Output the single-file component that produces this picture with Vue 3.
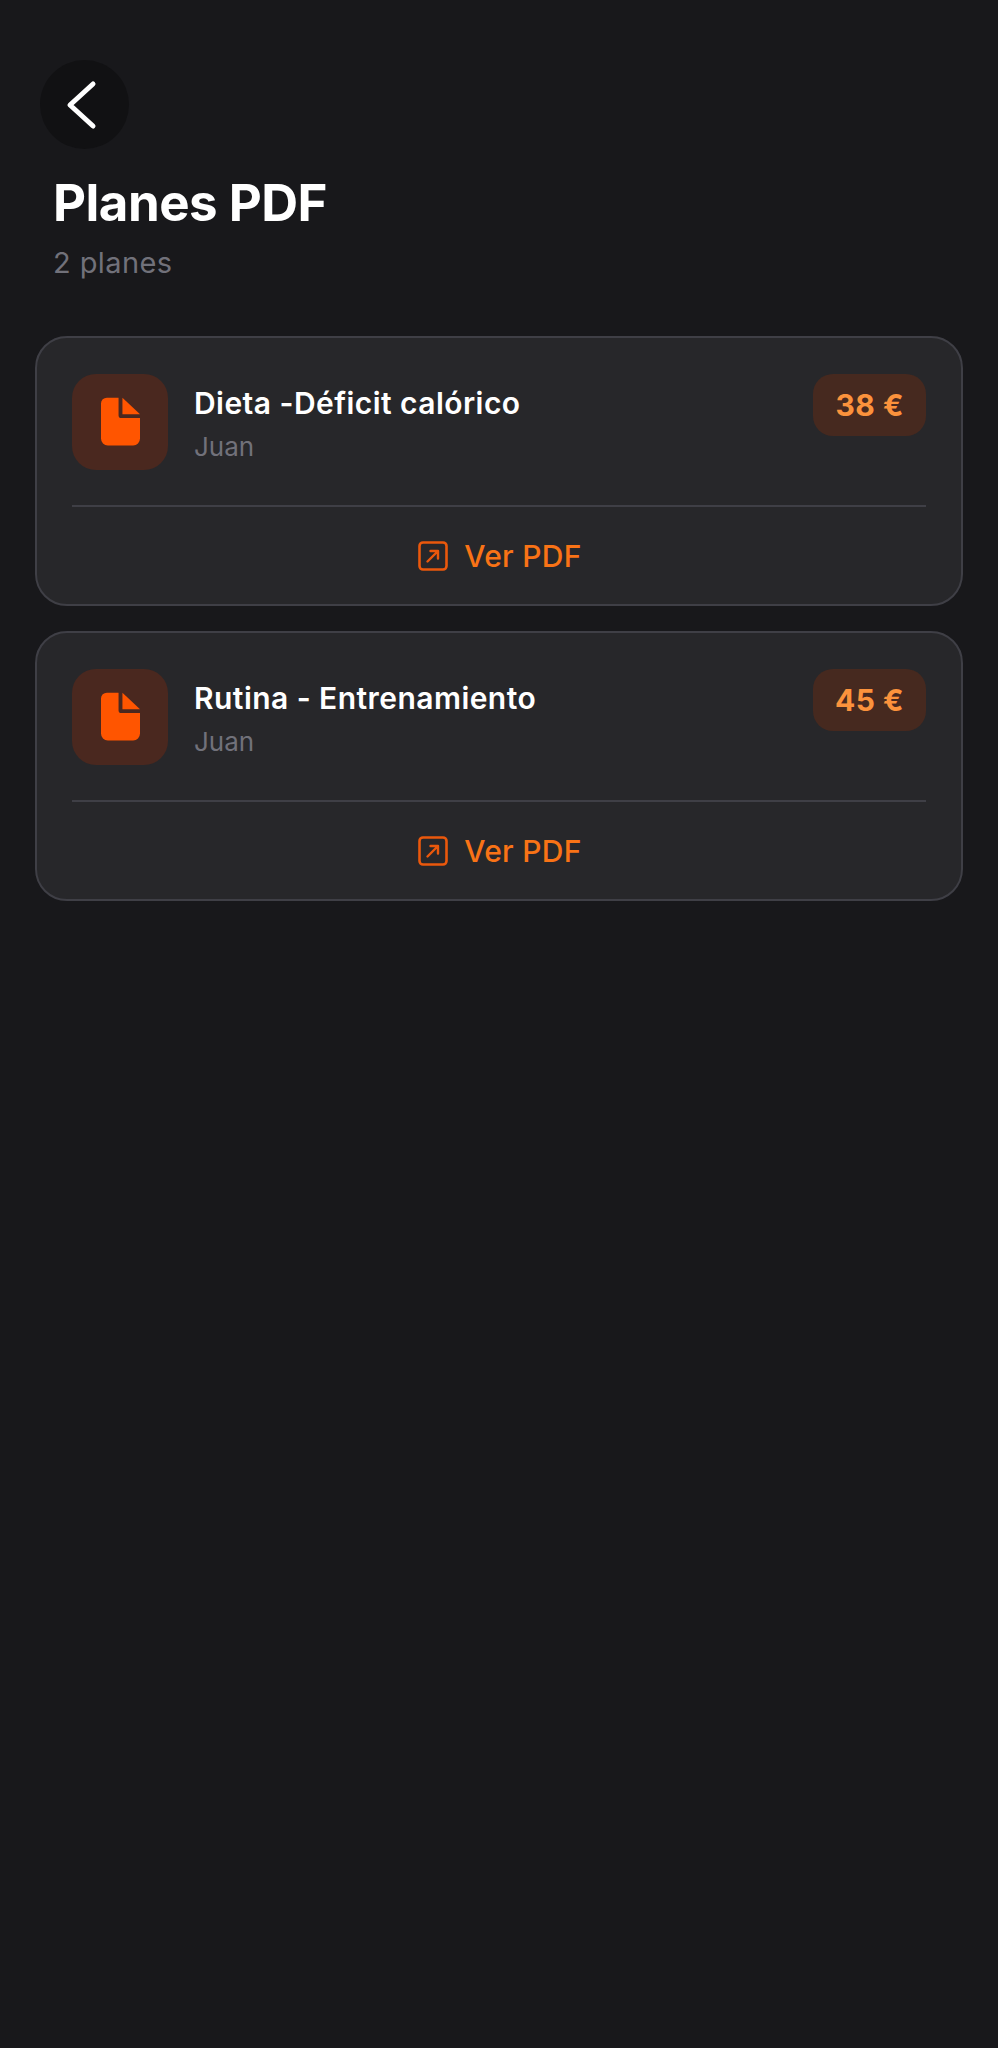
<template>
  <div class="page">
    <button class="back" type="button">
      <svg width="36" height="54" viewBox="0 0 36 54" fill="none">
        <path d="M30 6 L7 27 L30 48" stroke="#fff" stroke-width="5" stroke-linecap="round" stroke-linejoin="round" />
      </svg>
    </button>

    <div class="header">
      <h1>Planes PDF</h1>
      <p>{{ plans.length }} planes</p>
    </div>

    <div class="list">
      <div class="card" v-for="plan in plans" :key="plan.title">
        <div class="top">
          <div class="file-icon">
            <svg width="39" height="50" viewBox="0 0 40 50">
              <path d="M6 0 H18 V18 a3 3 0 0 0 3 3 H40 V42 a7 7 0 0 1 -7 7 H7 a7 7 0 0 1 -7 -7 V6 a6 6 0 0 1 6 -6 Z" fill="#ff5500" />
              <path d="M22 0 L40 17 H22 Z" fill="#ff5500" />
            </svg>
          </div>
          <div class="info">
            <div class="title">{{ plan.title }}</div>
            <div class="author">{{ plan.author }}</div>
          </div>
          <div class="price">{{ plan.price }} €</div>
        </div>
        <div class="action">
          <svg width="30" height="30" viewBox="0 0 30 30" fill="none" stroke="#ea580c" stroke-linecap="round" stroke-linejoin="round">
            <rect x="1.5" y="1.5" width="27" height="27" rx="3.5" stroke-width="2.6" />
            <path d="M9.5 20.5 L20 10 M12.5 10 H20 V17.5" stroke-width="2.4" />
          </svg>
          <span>Ver PDF</span>
        </div>
      </div>
    </div>
  </div>
</template>

<script setup>
const plans = [
  { title: 'Dieta -Déficit calórico', author: 'Juan', price: 38 },
  { title: 'Rutina - Entrenamiento', author: 'Juan', price: 45 },
]
</script>

<style>
html,
body {
  background: #18181b;
}
</style>

<style scoped>
.page {
  min-height: 2048px;
  box-sizing: border-box;
  padding: 60px 35px 0;
  background: #18181b;
  font-family: Inter, "Liberation Sans", sans-serif;
}

.back {
  display: flex;
  align-items: center;
  justify-content: center;
  width: 89px;
  height: 89px;
  margin-left: 5px;
  padding: 0 8px 0 0;
  border: none;
  border-radius: 50%;
  background: #111113;
}

.header {
  margin: 23px 0 0 18px;
}

h1 {
  margin: 0;
  font-size: 51px;
  line-height: 62px;
  font-weight: 700;
  letter-spacing: -0.5px;
  color: #fff;
}

.header p {
  margin: 11px 0 0;
  font-size: 29px;
  line-height: 36px;
  letter-spacing: 0.4px;
  color: #71717a;
}

.list {
  display: flex;
  flex-direction: column;
  gap: 25px;
  margin-top: 55px;
}

.card {
  box-sizing: border-box;
  height: 270px;
  padding: 36px 35px 0;
  background: #27272a;
  border: 2.5px solid #3f3f46;
  border-radius: 32px;
}

.top {
  display: flex;
  align-items: flex-start;
  height: 133px;
  border-bottom: 2px solid #3f3f46;
  box-sizing: border-box;
}

.file-icon {
  display: flex;
  align-items: center;
  justify-content: center;
  width: 96px;
  height: 96px;
  flex-shrink: 0;
  border-radius: 24px;
  background: #4a281f;
}

.info {
  flex: 1;
  margin-left: 26px;
}

.title {
  margin-top: 11px;
  font-size: 30px;
  line-height: 36px;
  font-weight: 600;
  letter-spacing: 0.45px;
  color: #fff;
}

.author {
  margin-top: 10px;
  font-size: 26px;
  line-height: 32px;
  color: #71717a;
}

.price {
  box-sizing: border-box;
  height: 62px;
  padding: 0 22px;
  border-radius: 20px;
  background: #46291f;
  font-size: 30px;
  line-height: 62px;
  font-weight: 700;
  letter-spacing: 0.5px;
  color: #fb923c;
}

.action {
  display: flex;
  align-items: center;
  justify-content: center;
  gap: 16px;
  height: 98px;
  padding-left: 2px;
  font-size: 30px;
  font-weight: 500;
  letter-spacing: 0.3px;
  color: #f97316;
}
</style>
